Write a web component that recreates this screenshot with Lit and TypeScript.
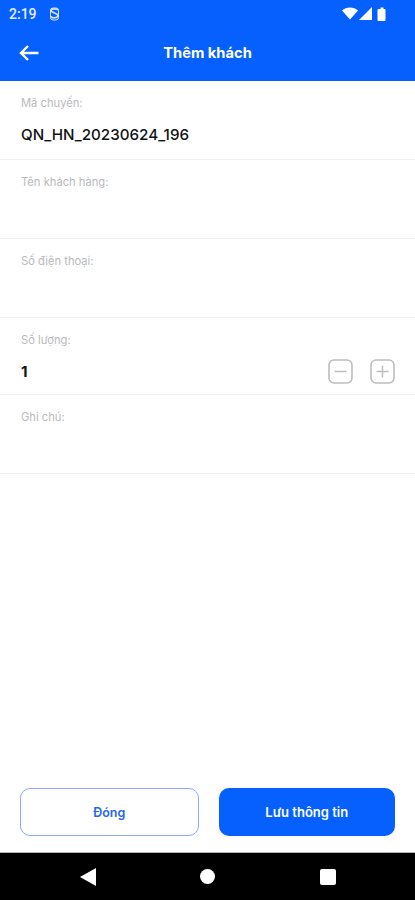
import { LitElement, html, css } from "lit";
import { customElement } from "lit/decorators.js";

@customElement("app-root")
export class AppRoot extends LitElement {
  static styles = css`
    :host { display: block; width: 415px; height: 900px; font-family: Inter, Roboto, "Noto Sans", sans-serif; background: #fff; }
    .page { height: 900px; display: flex; flex-direction: column; }
    .top { background: #0560fd; height: 81px; flex: none; color: #fff; display: flex; flex-direction: column; }
    .status { height: 27px; display: flex; align-items: center; padding: 0 25px 0 9px; justify-content: space-between; }
    .status-left { display: flex; align-items: center; gap: 12px; font: 500 14px Roboto, sans-serif; color: #e6eeff; }
    .status-right { display: flex; align-items: center; gap: 1px; }
    .bar { flex: 1; display: flex; align-items: center; justify-content: center; position: relative; padding-bottom: 3px; }
    .back { position: absolute; left: 18px; top: 17px; }
    .title { font-size: 14.7px; font-weight: 700; }
    .form { flex: 1; display: flex; flex-direction: column; }
    .row { border-bottom: 1px solid #f0f0f2; padding: 15px 21px 0; box-sizing: border-box; flex: none; position: relative; }
    .h79 { height: 79px; }
    .h77 { height: 77px; }
    .label { font-size: 11.2px; color: #b9b9bd; line-height: 14px; }
    .value { font-size: 15.2px; font-weight: 500; color: #111214; line-height: 18px; margin-top: 16px; }
    .qty { display: flex; align-items: center; justify-content: space-between; margin-top: 12px; }
    .qty .value { margin-top: 0; font-weight: 700; }
    .steppers { display: flex; gap: 17px; margin-right: -1px; }
    .step { display: block; }
    .actions { flex: none; display: flex; gap: 20px; padding: 0 20px 16px; }
    .btn { flex: 1; height: 48px; border-radius: 10px; box-sizing: border-box; display: flex; align-items: center; justify-content: center; font-size: 12.5px; font-weight: 600; }
    .ghost { border: 1px solid #8aa9f8; color: #2a66e8; background: #fff; }
    .solid { background: #0560fd; color: #fff; font-size: 13px; }
    .nav { flex: none; background: #000; display: flex; align-items: center; justify-content: center; border-top: 1px solid #b5b5b5; height: 47px; }
    .nav-inner { width: 256px; display: flex; justify-content: space-between; align-items: center; }
  `;

  private stepper(plus: boolean) {
    return html`<svg class="step" width="25" height="25" viewBox="0 0 25 25" fill="none" stroke="#bdbdbd">
      <rect x="1" y="1" width="23" height="23" rx="5" stroke-width="1.6"></rect>
      <path d=${plus ? "M6.5 12.5h12M12.5 6.5v12" : "M6.5 12.5h12"} stroke-width="1.5"></path>
    </svg>`;
  }

  render() {
    return html`<div class="page">
      <div class="top">
        <div class="status">
          <div class="status-left">
            <span>2:19</span>
            <svg width="11" height="14" viewBox="0 0 11 14" fill="none" stroke="#d5e2ff" stroke-width="1.7">
              <path d="M9 3.2C8.4 1.6 2.6 1.2 2 3.4c-.5 2 7 2.6 7 5.2 0 2.800-6.500 2.800-7 .6"></path>
              <rect x="1.500" y="1" width="8" height="12" rx="2.500" stroke-width="1"></rect>
            </svg>
          </div>
          <div class="status-right">
            <svg width="16" height="13" viewBox="0 0 16 13"><path d="M0 3.500C4-.5 12-.5 16 3.500L8 12.500z" fill="#fff"></path></svg>
            <svg width="13" height="13" viewBox="0 0 13 13"><path d="M13 0v13H0z" fill="#fff"></path></svg>
            <svg width="15" height="14" viewBox="0 0 15 14" style="margin-left:2px"><path d="M3.500 2h2V.5h3V2h1.500a1 1 0 0 1 .5 1v10a1 1 0 0 1-1 1h-6a1 1 0 0 1-1-1V3a1 1 0 0 1 1-1z" fill="#fff"></path></svg>
          </div>
        </div>
        <div class="bar">
          <svg class="back" width="21" height="18" viewBox="0 0 21 18" fill="none" stroke="#fff" stroke-width="2.400">
            <path d="M20.500 9H3M10 2 3 9l7 7"></path>
          </svg>
          <div class="title">Thêm khách</div>
        </div>
      </div>
      <div class="form">
        <div class="row h79"><div class="label">Mã chuyến:</div><div class="value">QN_HN_20230624_196</div></div>
        <div class="row h79"><div class="label">Tên khách hàng:</div></div>
        <div class="row h79"><div class="label">Số điện thoại:</div></div>
        <div class="row h77">
          <div class="label">Số lượng:</div>
          <div class="qty"><div class="value">1</div><div class="steppers">${this.stepper(false)}${this.stepper(true)}</div></div>
        </div>
        <div class="row h79"><div class="label">Ghi chú:</div></div>
      </div>
      <div class="actions">
        <div class="btn ghost">Đóng</div>
        <div class="btn solid">Lưu thông tin</div>
      </div>
      <div class="nav">
        <div class="nav-inner">
          <svg width="16" height="18" viewBox="0 0 16 18"><path d="M16 0v18L0 9z" fill="#fff"></path></svg>
          <svg width="15" height="15" viewBox="0 0 15 15"><circle cx="7.500" cy="7.500" r="7.500" fill="#fff"></circle></svg>
          <svg width="16" height="16" viewBox="0 0 16 16"><rect width="16" height="16" rx="2" fill="#fff"></rect></svg>
        </div>
      </div>
    </div>`;
  }
}
